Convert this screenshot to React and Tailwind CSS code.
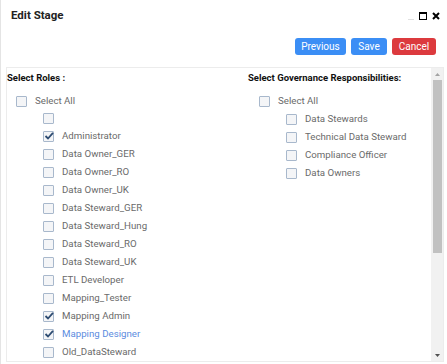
import React from "react";

const roles = [
  { label: "", checked: false },
  { label: "Administrator", checked: true },
  { label: "Data Owner_GER" },
  { label: "Data Owner_RO" },
  { label: "Data Owner_UK" },
  { label: "Data Steward_GER" },
  { label: "Data Steward_Hung" },
  { label: "Data Steward_RO" },
  { label: "Data Steward_UK" },
  { label: "ETL Developer" },
  { label: "Mapping_Tester" },
  { label: "Mapping Admin", checked: true },
  { label: "Mapping Designer", checked: true, hover: true },
  { label: "Old_DataSteward" },
];

const gov = ["Data Stewards", "Technical Data Steward", "Compliance Officer", "Data Owners"];

function Box({ checked }) {
  return (
    <span className="relative w-[11px] h-[11px] shrink-0 border border-[#a8b8cc] bg-[#f4f5f7] rounded-[1px]">
      {checked && (
        <svg className="absolute left-[0px] top-[-1px]" width="10" height="10" viewBox="0 0 10 10">
          <path d="M1.5 5 L4 7.5 L9 1.8" fill="none" stroke="#2e4c72" strokeWidth="1.8" />
        </svg>
      )}
    </span>
  );
}

function Row({ label, checked, hover }) {
  return (
    <div className="h-[18px] flex items-center gap-[8px]">
      <Box checked={checked} />
      <span className={hover ? "text-[#5b8ce0]" : "text-[#6a6a6a]"}>{label}</span>
    </div>
  );
}

export default function App() {
  return (
    <div
      className="w-[447px] h-[364px] bg-white border-l border-[#e4e4e4] flex flex-col overflow-hidden text-[9.7px]"
      style={{ fontFamily: "Roboto, 'Liberation Sans', sans-serif" }}
    >
      <div className="h-[32px] flex items-center pl-[10px] pr-[7px]">
        <span className="font-bold text-[11.5px] text-[#222]">Edit Stage</span>
        <div className="ml-auto flex items-center gap-[5px]">
          <span className="w-[6px] h-[1px] bg-[#e0e0e0] mt-[6px]" />
          <span className="w-[8px] h-[8px] border-[1.5px] border-black border-t-[2.5px]" />
          <svg width="8" height="8" viewBox="0 0 8 8">
            <path d="M1 1 L7 7 M7 1 L1 7" stroke="black" strokeWidth="2" />
          </svg>
        </div>
      </div>
      <div className="flex justify-end gap-[5px] pr-[11px] mt-[6px]">
        <button className="h-[17px] w-[51px] rounded-[3px] bg-[#3b8ef5] text-white text-[10px]">Previous</button>
        <button className="h-[17px] w-[36px] rounded-[3px] bg-[#3b8ef5] text-white text-[10px]">Save</button>
        <button className="h-[17px] w-[44px] rounded-[3px] bg-[#dc3a3e] text-white text-[10px]">Cancel</button>
      </div>
      <div className="ml-[5px] w-[438px] h-[295px] mt-[12px] border border-[#ececec] flex">
        <div className="flex-1 flex pt-[3px]">
          <div className="w-[241px]">
            <div className="h-[14px] leading-[14px] font-bold text-[#111] text-[9.5px]">Select Roles :</div>
            <div className="pl-[9px] mt-[7px]">
              <Row label="Select All" />
              <div className="pl-[27px] -mt-[1px]">
                {roles.map((r, i) => (
                  <Row key={i} {...r} />
                ))}
              </div>
            </div>
          </div>
          <div className="flex-1">
            <div className="h-[14px] leading-[14px] font-bold text-[#111] text-[9.5px]">Select Governance Responsibilities:</div>
            <div className="pl-[11px] mt-[7px]">
              <Row label="Select All" />
              <div className="pl-[27px]">
                {gov.map((g) => (
                  <Row key={g} label={g} />
                ))}
              </div>
            </div>
          </div>
        </div>
        <div className="w-[12px] bg-[#f1f1f1] flex flex-col items-center">
          <div className="h-[12px] flex items-center justify-center">
            <svg width="5" height="3" viewBox="0 0 5 3"><path d="M0 3 L2.5 0 L5 3 Z" fill="#a3a3a3" /></svg>
          </div>
          <div className="w-[9px] h-[173px] bg-[#c1c1c1]" />
          <div className="flex-1" />
          <div className="h-[12px] flex items-center justify-center">
            <svg width="5" height="3" viewBox="0 0 5 3"><path d="M0 0 L5 0 L2.5 3 Z" fill="#505050" /></svg>
          </div>
        </div>
      </div>
    </div>
  );
}
